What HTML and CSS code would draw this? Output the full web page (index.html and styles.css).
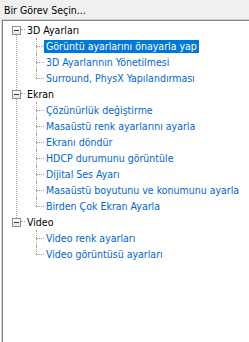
FILE: index.html
```html
<!DOCTYPE html>
<html lang="tr">
<head>
<meta charset="utf-8">
<title>Bir Görev Seçin</title>
<link rel="stylesheet" href="styles.css">
</head>
<body>
<div class="header">Bir Görev Seçin...</div>
<div class="panel">
  <div class="panel-inner">
    <ul class="tree">
      <li class="root">
        <div class="row"><span class="exp"></span><span class="hline"></span><span class="label">3D Ayarları</span></div>
        <ul class="children">
          <li><div class="row"><span class="cline"></span><span class="label sel">Görüntü ayarlarını önayarla yap</span></div></li>
          <li><div class="row"><span class="cline"></span><span class="label">3D Ayarlarının Yönetilmesi</span></div></li>
          <li><div class="row"><span class="cline"></span><span class="label">Surround, PhysX Yapılandırması</span></div></li>
        </ul>
      </li>
      <li class="root">
        <div class="row"><span class="exp"></span><span class="hline"></span><span class="label">Ekran</span></div>
        <ul class="children">
          <li><div class="row"><span class="cline"></span><span class="label">Çözünürlük değiştirme</span></div></li>
          <li><div class="row"><span class="cline"></span><span class="label">Masaüstü renk ayarlarını ayarla</span></div></li>
          <li><div class="row"><span class="cline"></span><span class="label">Ekranı döndür</span></div></li>
          <li><div class="row"><span class="cline"></span><span class="label">HDCP durumunu görüntüle</span></div></li>
          <li><div class="row"><span class="cline"></span><span class="label">Dijital Ses Ayarı</span></div></li>
          <li><div class="row"><span class="cline"></span><span class="label">Masaüstü boyutunu ve konumunu ayarla</span></div></li>
          <li><div class="row"><span class="cline"></span><span class="label">Birden Çok Ekran Ayarla</span></div></li>
        </ul>
      </li>
      <li class="root">
        <div class="row"><span class="exp"></span><span class="hline"></span><span class="label">Video</span></div>
        <ul class="children">
          <li><div class="row"><span class="cline"></span><span class="label">Video renk ayarları</span></div></li>
          <li><div class="row"><span class="cline"></span><span class="label">Video görüntüsü ayarları</span></div></li>
        </ul>
      </li>
    </ul>
  </div>
</div>
</body>
</html>
```

FILE: styles.css
```css
html, body {
  margin: 0;
  padding: 0;
  height: 100%;
  background: #ffffff;
  overflow: hidden;
}
body {
  display: flex;
  flex-direction: column;
  font-family: "DejaVu Sans Condensed", "Liberation Sans", Arial, sans-serif;
  font-stretch: condensed;
  font-size: 10.5px;
  color: #000;
}
.header {
  height: 19px;
  flex: none;
  background: #f0f0f0;
  padding-left: 4px;
  line-height: 20px;
  box-sizing: border-box;
}
.panel {
  flex: 1;
  border-top: 1px solid #d0d0d0;
  border-left: 1px solid #d0d0d0;
  margin-left: 1px;
}
.panel-inner {
  height: 100%;
  border-top: 1px solid #828790;
  border-left: 1px solid #828790;
  box-sizing: border-box;
  padding-top: 1px;
}
.tree, .children {
  list-style: none;
  margin: 0;
  padding: 0;
}
.tree > li {
  position: relative;
}
.tree > li:not(:last-child)::before {
  content: "";
  position: absolute;
  left: 13px;
  top: 8px;
  bottom: -8px;
  border-left: 1px dotted #a0a0a0;
}
.children > li {
  position: relative;
}
.children > li::before {
  content: "";
  position: absolute;
  left: 33px;
  top: 0;
  height: 100%;
  border-left: 1px dotted #a0a0a0;
}
.children > li:last-child::before {
  height: 8px;
}
.row {
  height: 16px;
  display: flex;
  align-items: center;
  position: relative;
}
.exp {
  position: relative;
  z-index: 1;
  width: 9px;
  height: 9px;
  box-sizing: border-box;
  margin-left: 9px;
  border: 1px solid #919191;
  background: linear-gradient(#ffffff, #e4e4e4);
  flex: none;
}
.exp::after {
  content: "";
  position: absolute;
  left: 1px;
  top: 3px;
  width: 5px;
  height: 1px;
  background: #2a3a55;
}
.hline {
  width: 4px;
  align-self: flex-start;
  height: 8px;
  border-bottom: 1px dotted #a0a0a0;
  box-sizing: border-box;
  flex: none;
}
.cline {
  width: 8px;
  margin-left: 33px;
  align-self: flex-start;
  height: 9px;
  border-bottom: 1px dotted #a0a0a0;
  box-sizing: border-box;
  flex: none;
}
.label {
  padding: 0 2px;
  height: 13px;
  line-height: 13px;
  white-space: nowrap;
}
.children .label {
  color: #0066cc;
}
.children .label.sel {
  background: #0078d7;
  color: #ffffff;
}
```
